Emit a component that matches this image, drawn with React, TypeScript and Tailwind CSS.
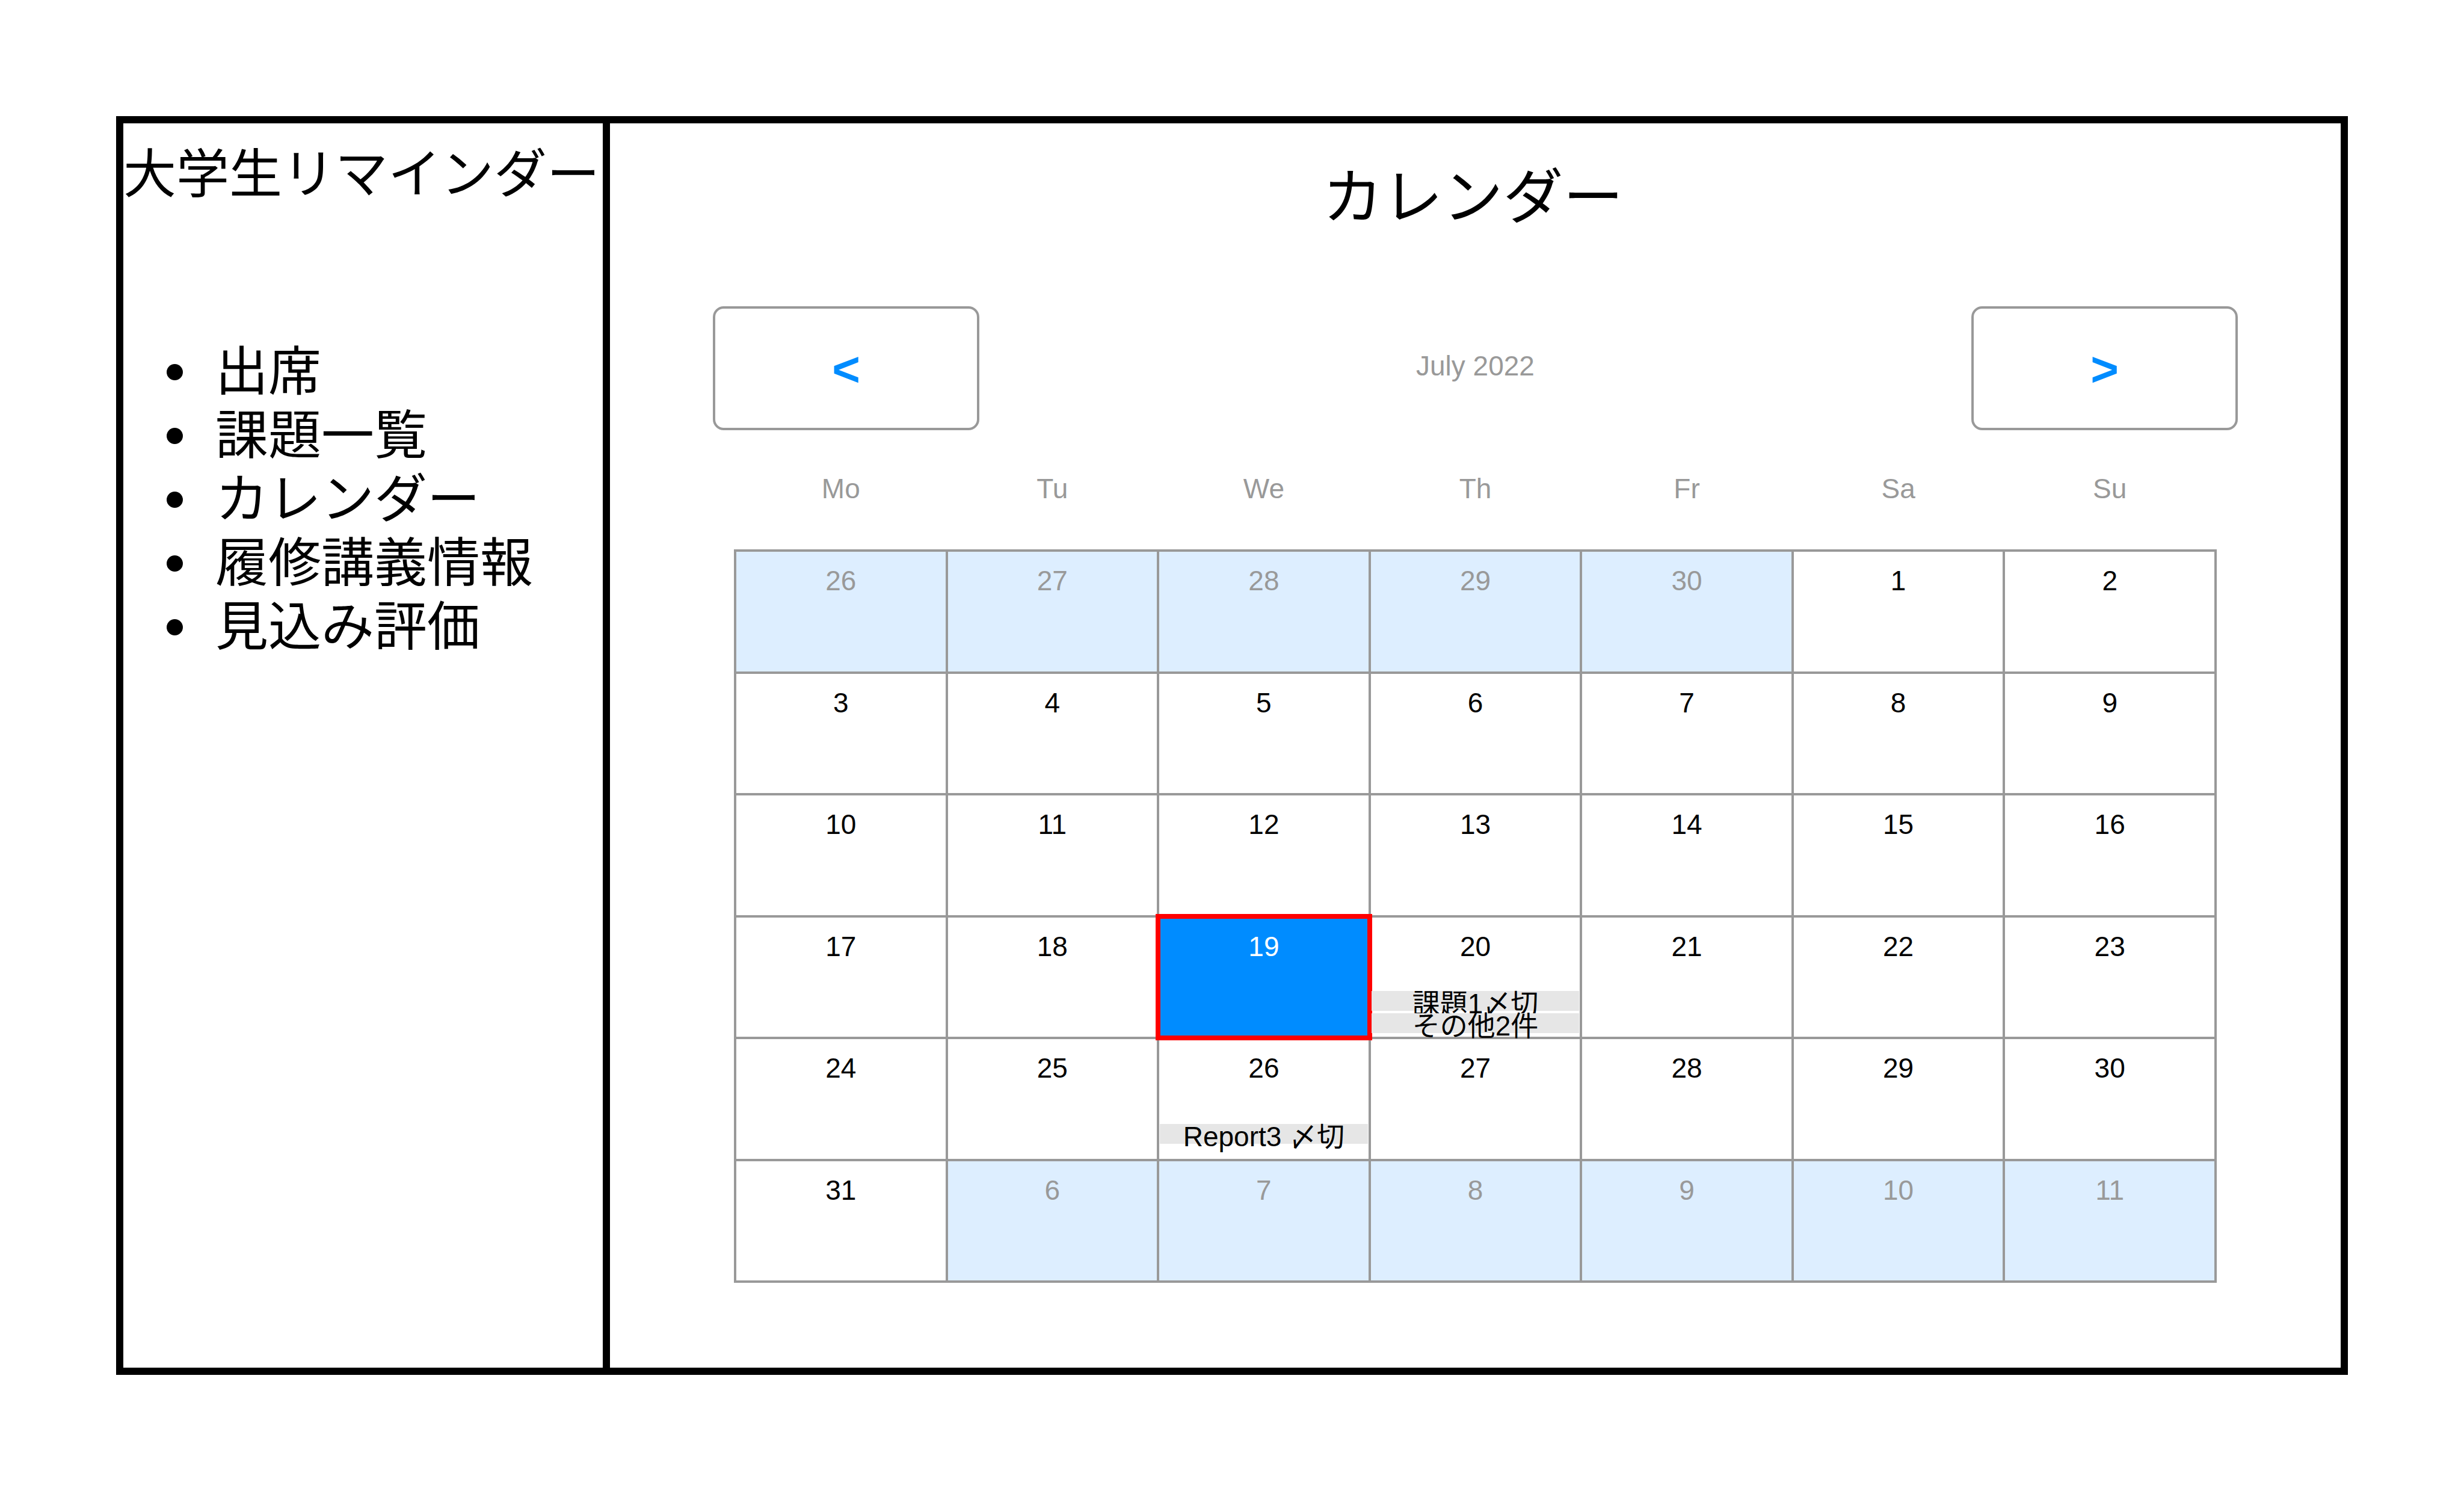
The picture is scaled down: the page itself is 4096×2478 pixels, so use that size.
type Day = {
  label: number;
  outside?: boolean;
  selected?: boolean;
  events?: string[];
};

const menu = ["出席", "課題一覧", "カレンダー", "履修講義情報", "見込み評価"];

const weekdays = ["Mo", "Tu", "We", "Th", "Fr", "Sa", "Su"];

const range = (from: number, to: number, outside = false): Day[] =>
  Array.from({ length: to - from + 1 }, (_, i) => ({ label: from + i, outside }));

const weeks: Day[][] = [
  [...range(26, 30, true), ...range(1, 2)],
  range(3, 9),
  range(10, 16),
  [
    ...range(17, 18),
    { label: 19, selected: true },
    { label: 20, events: ["課題1〆切", "その他2件"] },
    ...range(21, 23),
  ],
  [...range(24, 25), { label: 26, events: ["Report3 〆切"] }, ...range(27, 30)],
  [...range(31, 31), ...range(6, 11, true)],
];

function cellColors(day: Day) {
  if (day.selected) {
    return "bg-[#008cff] text-white outline-8 -outline-offset-4 outline-[#ff0000]";
  }
  return day.outside ? "bg-[#ddeeff] text-[#999999]" : "text-black";
}

function DayCell({ day }: { day: Day }) {
  const events = day.events ?? [];
  return (
    <td
      className={`h-[202px] border-4 border-[#999999] px-px pt-5 pb-0 text-center align-top ${cellColors(day)}`}
    >
      <div className="leading-[56px]">{day.label}</div>
      {events.length > 0 && (
        <ul className={`flex flex-col gap-1 ${events.length > 1 ? "mt-[46px]" : "mt-[65px]"}`}>
          {events.map((event) => (
            <li
              key={event}
              className="relative h-[33px] bg-[#e6e6e6] leading-[43px] whitespace-nowrap"
            >
              {event}
            </li>
          ))}
        </ul>
      )}
    </td>
  );
}

function NavButton({ label, children }: { label: string; children: string }) {
  return (
    <button
      type="button"
      aria-label={label}
      className="flex h-[206px] w-[443px] items-center justify-center rounded-[18px] border-4 border-[#999999] pt-1 text-[80px] leading-none font-bold text-[#008cff]"
    >
      {children}
    </button>
  );
}

export default function App() {
  return (
    <div className="flex min-h-screen bg-white p-[193px] font-['Liberation_Sans','Noto_Sans_CJK_JP',sans-serif] text-black">
      <div className="flex flex-1 border-12 border-black" lang="ja">
        <aside className="w-[809px] shrink-0 border-r-12 border-black pt-8 text-[88px] leading-[106px]">
          <h2 className="whitespace-nowrap">大学生リマインダー</h2>
          <nav className="mt-[222px]">
            <ul className="pl-[72px]">
              {menu.map((item) => (
                <li
                  key={item}
                  className="flex items-center gap-[54px] before:size-[27px] before:rounded-full before:bg-black"
                >
                  <a href="#">{item}</a>
                </li>
              ))}
            </ul>
          </nav>
        </aside>

        <main className="min-w-0 flex-1 px-[171px] pt-[63px]">
          <h1 className="pr-2 text-center text-[100px] leading-[120px]">カレンダー</h1>

          <div className="mt-[121px] flex items-center justify-between">
            <NavButton label="Previous month">{"<"}</NavButton>
            <p className="pb-2 text-[46px] leading-[56px] text-[#999999]">July 2022</p>
            <NavButton label="Next month">{">"}</NavButton>
          </div>

          <div className="px-[35px]">
            <table className="h-[1417px] w-full table-fixed border-collapse text-[46px]">
              <thead>
                <tr>
                  {weekdays.map((name) => (
                    <th
                      key={name}
                      scope="col"
                      className="h-[200px] p-0 pb-1 text-center leading-[56px] font-normal text-[#999999]"
                    >
                      {name}
                    </th>
                  ))}
                </tr>
              </thead>
              <tbody>
                {weeks.map((week, i) => (
                  <tr key={i}>
                    {week.map((day) => (
                      <DayCell key={day.label} day={day} />
                    ))}
                  </tr>
                ))}
              </tbody>
            </table>
          </div>
        </main>
      </div>
    </div>
  );
}
